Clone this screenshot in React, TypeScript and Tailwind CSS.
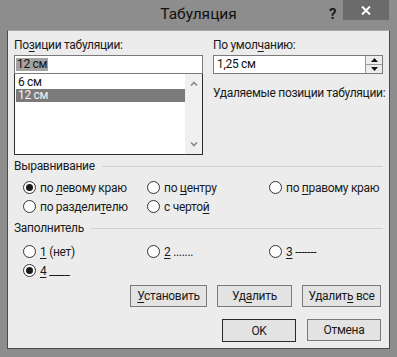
import React from 'react';

const font = { fontFamily: 'Roboto, "Noto Sans", sans-serif' };

function U({ children }: { children: React.ReactNode }) {
  return <span className="underline underline-offset-[2px] decoration-1">{children}</span>;
}

function Radio({ checked, children }: { checked?: boolean; children: React.ReactNode }) {
  return (
    <div className="flex items-center gap-[4px] h-[19px]">
      <span className="w-[13px] h-[13px] rounded-full border border-[#333] bg-white flex items-center justify-center shrink-0">
        {checked && <span className="w-[7px] h-[7px] rounded-full bg-[#1a1a1a]" />}
      </span>
      <span className="text-[12px] leading-4 text-[#1a1a1a] whitespace-nowrap">{children}</span>
    </div>
  );
}

function Group({ title }: { title: string }) {
  return (
    <div className="flex items-center h-4">
      <span className="text-[12px] leading-4 text-[#1a1a1a] whitespace-nowrap">{title}</span>
      <div className="flex-1 h-px bg-[#cfcfcf] ml-[7px]" />
    </div>
  );
}

function Btn({ w, strong, children }: { w: string; strong?: boolean; children: React.ReactNode }) {
  return (
    <div
      className={`${w} flex items-center justify-center bg-[#e3e3e3] text-[12px] text-[#1a1a1a] border ${
        strong ? 'border-[#2a2a2a] h-[23px]' : 'border-[#7a7a7a] h-[22px]'
      }`}
    >
      <span className="whitespace-nowrap">{children}</span>
    </div>
  );
}

export default function App() {
  return (
    <div className="w-[397px] h-[357px] bg-[#8d8d8d] flex flex-col tracking-[-0.3px]" style={font}>
      <div className="h-[30px] relative flex items-center justify-center">
        <span className="text-[15.5px] text-[#111] tracking-normal">Табуляция</span>
        <span className="absolute left-[329px] top-[3px] text-[15px] font-bold text-[#1a1a1a]">?</span>
        <div className="absolute left-[343px] top-0 w-[46px] h-[20px] bg-[#6b6b6b] flex items-center justify-center">
          <svg width="10" height="9" viewBox="0 0 10 9">
            <path d="M1 0.5 L9 8.5 M9 0.5 L1 8.5" stroke="#fff" strokeWidth="2" />
          </svg>
        </div>
      </div>

      <div className="mx-[7px] h-[319px] bg-[#ececec] border border-[#4a4a4a] border-t-[#a8a8a8] px-[6px] pt-[6px]">
        <div className="flex gap-[10px]">
          <div className="w-[189px]">
            <div className="text-[12px] leading-4 text-[#1a1a1a]">
              По<U>з</U>иции табуляции:
            </div>
            <div className="mt-[2px] h-[19px] border border-[#7a7a7a] bg-white flex items-center px-[1px]">
              <span className="bg-[#a3a3a3] text-[12px] leading-[13px] px-[1px] text-[#111]">12 см</span>
            </div>
            <div className="h-[81px] border-x border-b border-[#2e2e2e] bg-white flex">
              <div className="flex-1 pt-[2px] pl-[1px]">
                <div className="h-[13px] text-[12px] leading-[13px] pl-[2px] text-[#111]">6 см</div>
                <div className="h-[13px] text-[12px] leading-[13px] pl-[2px] bg-[#7a7a7a] text-[#f4f4f4]">12 см</div>
              </div>
              <div className="w-[17px] bg-[#f0f0f0] flex flex-col items-center justify-between py-[7px]">
                <svg width="8" height="5" viewBox="0 0 8 5">
                  <path d="M1 4.5 L4 1.5 L7 4.5" stroke="#8a8a8a" strokeWidth="1.6" fill="none" />
                </svg>
                <svg width="8" height="5" viewBox="0 0 8 5">
                  <path d="M1 0.5 L4 3.5 L7 0.5" stroke="#8a8a8a" strokeWidth="1.6" fill="none" />
                </svg>
              </div>
            </div>
          </div>

          <div className="w-[170px]">
            <div className="text-[12px] leading-4 text-[#1a1a1a]">
              По умол<U>ч</U>анию:
            </div>
            <div className="mt-[2px] h-[19px] border border-[#7a7a7a] bg-white flex items-center">
              <span className="flex-1 text-[12px] leading-[13px] pl-[3px] text-[#111]">1,25 см</span>
              <div className="w-[17px] h-full border-l border-[#9a9a9a] bg-[#ededed] flex flex-col">
                <div className="flex-1 flex items-center justify-center border-b border-[#9a9a9a]">
                  <svg width="7" height="4" viewBox="0 0 7 4"><path d="M0 4 L3.5 0 L7 4 Z" fill="#111" /></svg>
                </div>
                <div className="flex-1 flex items-center justify-center">
                  <svg width="7" height="4" viewBox="0 0 7 4"><path d="M0 0 L3.5 4 L7 0 Z" fill="#111" /></svg>
                </div>
              </div>
            </div>
            <div className="mt-[11px] text-[12px] leading-4 text-[#1a1a1a] whitespace-nowrap">
              Удаляемые позиции табуляции:
            </div>
          </div>
        </div>

        <div className="mt-[3px]">
          <Group title="Выравнивание" />
          <div className="mt-[4px] pl-[9px] grid grid-cols-[124px_122px_1fr]">
            <Radio checked>
              по <U>л</U>евому краю
            </Radio>
            <Radio>
              по <U>ц</U>ентру
            </Radio>
            <Radio>
              по <U>п</U>равому краю
            </Radio>
            <Radio>
              по раздели<U>т</U>елю
            </Radio>
            <Radio>
              с черто<U>й</U>
            </Radio>
          </div>
        </div>

        <div className="mt-[4px]">
          <Group title="Заполнитель" />
          <div className="mt-[6px] pl-[9px] grid grid-cols-[124px_122px_1fr]">
            <Radio>
              <U>1</U> (нет)
            </Radio>
            <Radio>
              <U>2</U> .......
            </Radio>
            <Radio>
              <U>3</U> -------
            </Radio>
            <Radio checked>
              <U>4</U> ____
            </Radio>
          </div>
        </div>

        <div className="mt-[5px] flex justify-end gap-[10px] pr-[2px]">
          <Btn w="w-[77px]">
            <U>У</U>становить
          </Btn>
          <Btn w="w-[75px]">
            Уд<U>а</U>лить
          </Btn>
          <Btn w="w-[79px]">
            Удалит<U>ь</U> все
          </Btn>
        </div>

        <div className="mt-[12px] flex justify-end gap-[11px] pr-[2px]">
          <Btn w="w-[74px]" strong>
            OK
          </Btn>
          <Btn w="w-[74px]">Отмена</Btn>
        </div>
      </div>
    </div>
  );
}
